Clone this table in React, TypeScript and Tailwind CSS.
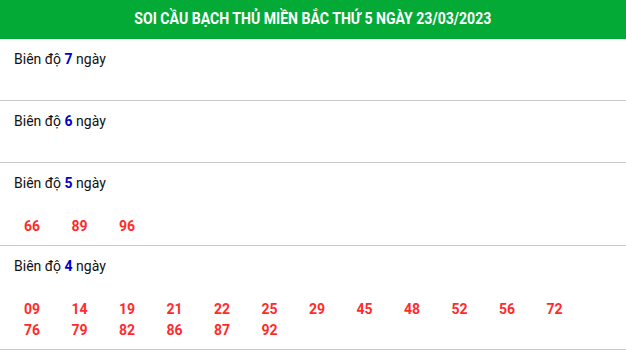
const rows: { days: number; nums: string[] }[] = [
  { days: 7, nums: [] },
  { days: 6, nums: [] },
  { days: 5, nums: ['66', '89', '96'] },
  {
    days: 4,
    nums: ['09', '14', '19', '21', '22', '25', '29', '45', '48', '52', '56', '72', '76', '79', '82', '86', '87', '92'],
  },
];

export default function App() {
  return (
    <div className="w-[626px] bg-white font-['Roboto',sans-serif]">
      <div className="h-[39px] bg-[#03aa35] flex items-center justify-center">
        <h2 className="text-white text-[16px] font-bold scale-x-[0.88] pb-[2px]">
          SOI CẦU BẠCH THỦ MIỀN BẮC THỨ 5 NGÀY 23/03/2023
        </h2>
      </div>

      {rows.map((row) => (
        <div key={row.days} className="border-b border-[#c8c8c8] pt-[10px] pb-[8px]">
          <div className="px-[14px] h-[21px] leading-[21px] text-[14px] text-[#111]">
            Biên độ <span className="text-[#0000cc] font-bold">{row.days}</span> ngày
          </div>
          <div className="mt-[22px] pl-[24px] grid grid-cols-[repeat(12,47.5px)]">
            {row.nums.map((n) => (
              <span key={n} className="h-[21px] leading-[21px] text-[14px] font-bold text-[#ff2b2b]">
                {n}
              </span>
            ))}
          </div>
        </div>
      ))}
    </div>
  );
}
